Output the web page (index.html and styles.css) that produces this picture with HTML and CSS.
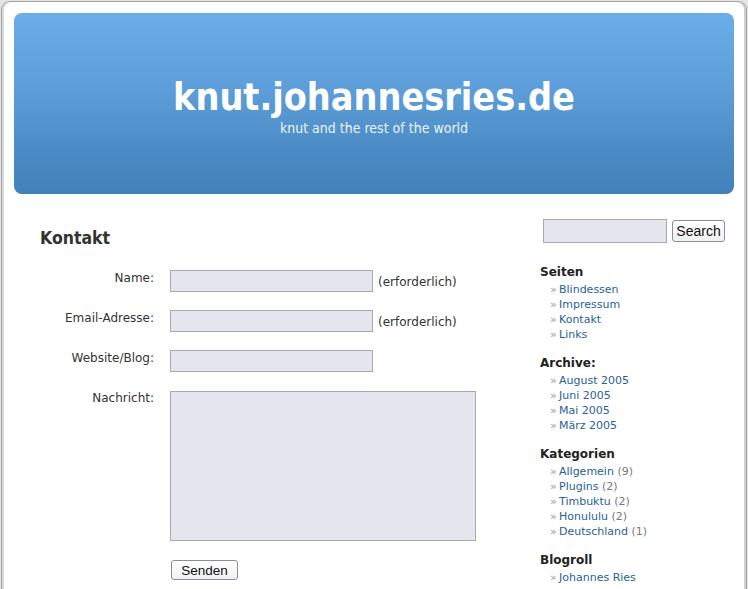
FILE: index.html
```html
<!DOCTYPE html>
<html lang="de">
<head>
<meta charset="utf-8">
<title>knut.johannesries.de</title>
<link rel="stylesheet" href="styles.css">
</head>
<body>
<div class="page">
  <header class="header">
    <h1 class="site-title">knut.johannesries.de</h1>
    <p class="site-desc">knut and the rest of the world</p>
  </header>
  <div class="wrap">
    <main class="content">
      <h2 class="page-title">Kontakt</h2>
      <form class="contact">
        <label class="lbl">Name:</label>
        <div class="field"><input class="inp" type="text"><span class="req">(erforderlich)</span></div>
        <label class="lbl">Email-Adresse:</label>
        <div class="field"><input class="inp" type="text"><span class="req">(erforderlich)</span></div>
        <label class="lbl">Website/Blog:</label>
        <div class="field"><input class="inp" type="text"></div>
        <label class="lbl">Nachricht:</label>
        <div class="field"><textarea class="msg"></textarea></div>
        <span></span>
        <div class="field submit-row"><button type="button" class="btn send">Senden</button></div>
      </form>
    </main>
    <aside class="sidebar">
      <div class="search"><input class="inp search-inp" type="text"><button type="button" class="btn search-btn">Search</button></div>
      <section class="widget">
        <h3>Seiten</h3>
        <ul>
          <li><a href="#">Blindessen</a></li>
          <li><a href="#">Impressum</a></li>
          <li><a href="#">Kontakt</a></li>
          <li><a href="#">Links</a></li>
        </ul>
      </section>
      <section class="widget">
        <h3>Archive:</h3>
        <ul>
          <li><a href="#">August 2005</a></li>
          <li><a href="#">Juni 2005</a></li>
          <li><a href="#">Mai 2005</a></li>
          <li><a href="#">März 2005</a></li>
        </ul>
      </section>
      <section class="widget">
        <h3>Kategorien</h3>
        <ul>
          <li><a href="#">Allgemein</a> <span class="cnt">(9)</span></li>
          <li><a href="#">Plugins</a> <span class="cnt">(2)</span></li>
          <li><a href="#">Timbuktu</a> <span class="cnt">(2)</span></li>
          <li><a href="#">Honululu</a> <span class="cnt">(2)</span></li>
          <li><a href="#">Deutschland</a> <span class="cnt">(1)</span></li>
        </ul>
      </section>
      <section class="widget">
        <h3>Blogroll</h3>
        <ul>
          <li><a href="#">Johannes Ries</a></li>
        </ul>
      </section>
    </aside>
  </div>
</div>
</body>
</html>
```
FILE: styles.css
```css
html, body {
  margin: 0;
  padding: 0;
  background: #e4e4e4;
  height: 100%;
  overflow: hidden;
}
body {
  padding: 1px 1px 0 1px;
  box-sizing: border-box;
  font-family: "DejaVu Sans", Verdana, sans-serif;
  color: #333;
}
.page {
  width: 746px;
  height: 620px;
  box-sizing: border-box;
  background: #fff;
  border: 1px solid #a3a3a3;
  border-bottom: none;
  border-radius: 9px 9px 0 0;
  box-shadow: inset 2px 0 0 #d9d9d9, inset -2px 0 0 #d0d0d0;
  padding: 11px 11px 0 12px;
}
.header {
  width: 720px;
  height: 181px;
  border-radius: 8px;
  background: linear-gradient(#6aade8 0%, #5e9fdb 40%, #4c8cc6 75%, #4280b8 100%);
  color: #fff;
  text-align: center;
  display: flex;
  flex-direction: column;
  align-items: center;
  box-sizing: border-box;
  padding-top: 64px;
}
.site-title {
  margin: 0;
  font-family: "DejaVu Sans Condensed", "DejaVu Sans", sans-serif;
  font-weight: bold;
  font-size: 37.4px;
  line-height: 40px;
}
.site-desc {
  margin: 3px 0 0;
  font-family: "DejaVu Sans Condensed", "DejaVu Sans", sans-serif;
  font-size: 14px;
  line-height: 16px;
  color: #eef4fb;
}
.wrap {
  display: flex;
  align-items: flex-start;
}
.content {
  width: 500px;
  padding: 33px 0 0 26px;
  box-sizing: border-box;
}
.page-title {
  margin: 0 0 21px;
  font-family: "DejaVu Sans Condensed", "DejaVu Sans", sans-serif;
  font-size: 17.5px;
  line-height: 22px;
  font-weight: bold;
  color: #333;
}
.contact {
  display: grid;
  grid-template-columns: 114px auto;
  column-gap: 16px;
  row-gap: 18px;
  font-size: 12px;
}
.lbl {
  text-align: right;
  padding-top: 1px;
  line-height: 15px;
  color: #333;
}
.field {
  display: flex;
  align-items: center;
  gap: 5px;
}
.inp {
  width: 203px;
  height: 22px;
  box-sizing: border-box;
  background: #e5e6ed;
  border: 1px solid #a8aab0;
  margin: 0;
  padding: 0 3px;
}
.req {
  font-size: 12px;
  color: #333;
  padding-top: 2px;
}
.msg {
  width: 306px;
  height: 150px;
  box-sizing: border-box;
  background: #e5e6ed;
  border: 1px solid #a8aab0;
  margin: 1px 0 0;
  resize: none;
  display: block;
}
.submit-row {
  padding-top: 1px;
}
.btn {
  font-family: "Liberation Sans", Arial, sans-serif;
  background: linear-gradient(#ffffff, #f1f1f4);
  border: 1px solid #8b8e96;
  border-radius: 3px;
  color: #111;
  padding: 0;
  margin: 0;
}
.send {
  width: 67px;
  height: 20px;
  font-size: 13.5px;
  margin-left: 1px;
}
.sidebar {
  width: 190px;
  margin-left: 26px;
  padding-top: 25px;
  font-size: 11px;
}
.search {
  display: flex;
  align-items: center;
  gap: 5px;
  padding-left: 3px;
  margin-bottom: 21px;
}
.search-inp {
  width: 124px;
  height: 24px;
}
.search-btn {
  width: 53px;
  height: 22px;
  font-size: 14px;
}
.widget {
  margin-bottom: 13px;
}
.widget h3 {
  margin: 0 0 1px;
  font-size: 12px;
  line-height: 17px;
  font-weight: bold;
  color: #222;
}
.widget ul {
  list-style: none;
  margin: 0;
  padding: 0 0 0 10px;
}
.widget li {
  line-height: 15px;
  font-size: 11px;
  color: #777;
}
.widget li::before {
  content: "\00BB";
  color: #999;
  margin-right: 2px;
  display: inline-block;
  width: 7px;
}
.widget a {
  color: #2a6196;
  text-decoration: none;
}
.cnt {
  color: #777;
}
```
